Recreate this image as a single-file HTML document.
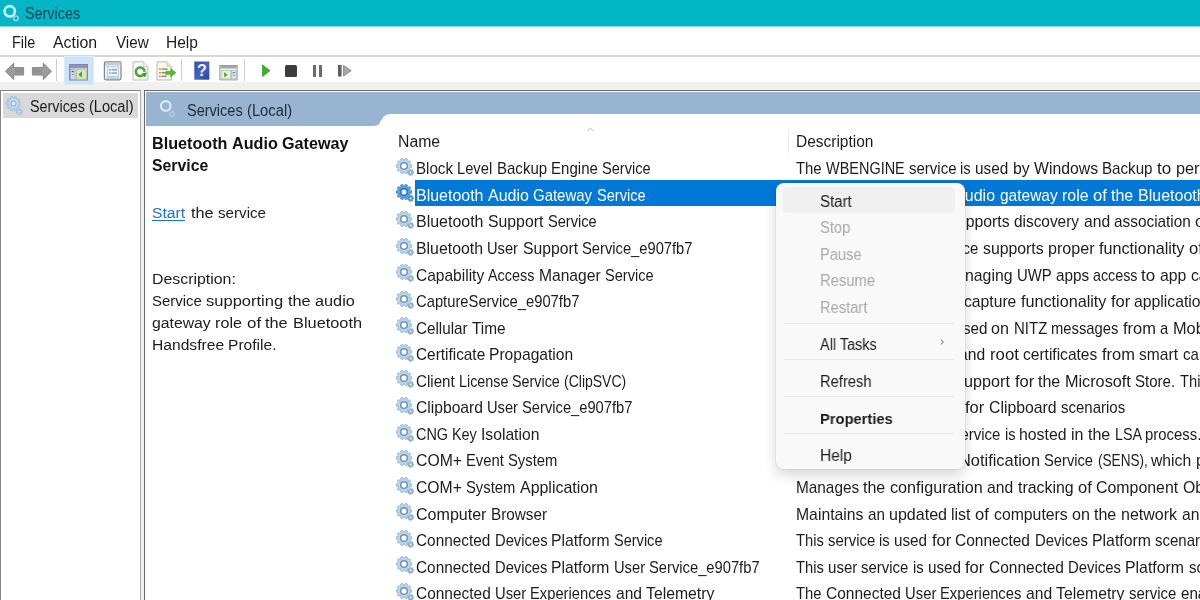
<!DOCTYPE html>
<html lang="en"><head><meta charset="utf-8"><title>Services</title>
<style>
html,body{margin:0;padding:0}
body{width:1200px;height:600px;overflow:hidden;position:relative;background:#fff;font-family:"Liberation Sans",sans-serif;font-size:16px;color:#1a1a1a}
.a{position:absolute}
.t{will-change:transform;position:absolute;white-space:pre;line-height:20px;height:20px}
.lnk .w{text-decoration:underline;text-underline-offset:2px}
.w{position:absolute;top:0;left:0;white-space:pre;transform-origin:0 50%;display:block}
.clip{overflow:hidden}
svg{position:absolute;overflow:visible}
</style></head><body>


<div class="a" id="titlebar" style="left:0;top:0;width:1200px;height:26px;background:#02b6c6;border-bottom:1px solid #7fdae2"></div>
<div class="a" id="menubar" style="left:0;top:27px;width:1200px;height:28px;background:#fff"></div>
<div class="a" style="left:0;top:55.4px;width:1200px;height:1.2px;background:#d6d6d6"></div>
<div class="a" id="toolbar" style="left:0;top:56.6px;width:1200px;height:25.8px;background:#fff"></div>
<div class="a" style="left:0;top:82px;width:1200px;height:518px;background:#f0f0f0"></div>
<!-- left tree pane -->
<div class="a" id="tree" style="left:0;top:90px;width:141px;height:510px;background:#fff;border-top:1px solid #828282;border-left:1px solid #828282;border-right:1px solid #a8a8a8;box-sizing:border-box"></div>
<div class="a" style="left:3px;top:93px;width:134.5px;height:24.5px;background:#d9d9d9"></div>
<!-- right pane -->
<div class="a" id="rpane" style="left:144.4px;top:90.3px;width:1056px;height:510px;background:#fff;border-top:1.2px solid #696969;border-left:1.6px solid #696969;box-sizing:border-box"></div>
<div class="a" id="rhead" style="left:146px;top:91.5px;width:1054px;height:34.3px;background:#99b4d1"></div>
<div class="a" id="list" style="left:380.5px;top:114px;width:820px;height:486px;background:#fff;border-top-left-radius:9px"></div>
<svg style="left:371px;top:116px" width="11" height="10" viewBox="0 0 11 10"><path d="M1 10 Q9.5 10 9.5 4.5 L11 4.5 L11 10 Z" fill="#fff"/></svg>
<div class="a" style="left:787.5px;top:129px;width:1px;height:24px;background:#ececec"></div>
<!-- selection -->
<div class="a" id="sel" style="left:414.6px;top:180.2px;width:786px;height:26.2px;background:#0078d7"></div>

<svg style="left:4px;top:61px" width="22" height="21" viewBox="0 0 22 21">
<path d="M1.5 10.3 L9.7 2.2 L9.7 6.6 L19.6 6.6 L19.6 14 L9.7 14 L9.7 18.4 Z" fill="#9c9c9c" stroke="#868686" stroke-width="1"/>
<path d="M11 8 L18 8 L18 12.6 L11 12.6Z" fill="#8a8a8a" opacity="0.6"/>
</svg>
<svg style="left:31px;top:61px" width="22" height="21" viewBox="0 0 22 21">
<path d="M20.5 10.3 L12.3 2.2 L12.3 6.6 L1.4 6.6 L1.4 14 L12.3 14 L12.3 18.4 Z" fill="#9c9c9c" stroke="#868686" stroke-width="1"/>
<path d="M3 8 L11 8 L11 12.6 L3 12.6Z" fill="#8a8a8a" opacity="0.6"/>
</svg>
<div class="a" style="left:56px;top:59px;width:1px;height:22px;background:#cfcfcf"></div>
<div class="a" style="left:181px;top:59px;width:1px;height:22px;background:#cfcfcf"></div>
<div class="a" style="left:244px;top:59px;width:1px;height:22px;background:#cfcfcf"></div>
<div class="a" style="left:65px;top:57px;width:28px;height:27px;background:#cce4f7;box-shadow:0 0 0 1px #d9ecfa"></div>
<svg style="left:69px;top:64px" width="19" height="17" viewBox="0 0 19 17">
<rect x="0.5" y="0.5" width="18" height="15.5" fill="#e8edf5" stroke="#8289a8" stroke-width="1"/>
<rect x="1" y="1" width="17" height="3.4" fill="#8e94b4"/>
<rect x="1.5" y="5.5" width="4.6" height="10" fill="#d5d9ea" stroke="#9095b5" stroke-width="0.6"/>
<rect x="2.6" y="7" width="2.2" height="1.2" fill="#4b4f6a"/>
<rect x="2.6" y="10" width="2.2" height="1" fill="#7a7f9a"/>
<rect x="7.3" y="5.8" width="10" height="9.4" fill="#d3e9b8" stroke="#98b57b" stroke-width="0.6"/>
<path d="M12.8 7.2 L12.8 13.6 L9.4 10.4Z" fill="#4e9a3a"/>
</svg>
<svg style="left:103px;top:61px" width="20" height="20" viewBox="0 0 20 20">
<rect x="1.4" y="0.8" width="16.6" height="18" rx="1.5" fill="#f4f7fa" stroke="#80858e" stroke-width="1.2"/>
<rect x="2" y="1.6" width="15.6" height="2.6" fill="#c5ccd6"/>
<rect x="4.2" y="5.2" width="11.6" height="10.4" fill="#e9f1f8" stroke="#a9b9c9" stroke-width="0.7"/>
<rect x="6" y="8.2" width="1.6" height="1.2" fill="#6f8bb0"/><rect x="8.6" y="8.2" width="5.6" height="1.2" fill="#7f8fa5"/>
<rect x="6" y="11.4" width="1.6" height="1.2" fill="#6f8bb0"/><rect x="8.6" y="11.4" width="5.6" height="1.2" fill="#7f8fa5"/>
<rect x="3" y="16.2" width="13.6" height="1.8" fill="#a9d7ee"/>
</svg>
<svg style="left:132px;top:61px" width="17" height="20" viewBox="0 0 17 20">
<path d="M1 0.8 L11.2 0.8 L15.8 5.4 L15.8 19 L1 19Z" fill="#fbfbf9" stroke="#b9b9b4" stroke-width="1"/>
<path d="M11.2 0.8 L11.2 5.4 L15.8 5.4" fill="#eee" stroke="#c4c4be" stroke-width="0.8"/>
<circle cx="8.2" cy="10.8" r="4.3" fill="none" stroke="#4aa53a" stroke-width="2.6"/>
<path d="M8.2 10.8 L14.6 10.8 L14.6 16.6 Z" fill="#fbfbf9"/>
<path d="M9.6 12.6 L15 11.4 L13 16.6 Z" fill="#3c9a2e"/>
</svg>
<svg style="left:156px;top:61px" width="21" height="20" viewBox="0 0 21 20">
<path d="M1 0.8 L11 0.8 L15.4 5.2 L15.4 19 L1 19Z" fill="#fbf8ea" stroke="#bdb9a6" stroke-width="1"/>
<path d="M11 0.8 L11 5.2 L15.4 5.2" fill="#eee9d6" stroke="#c6c2ae" stroke-width="0.8"/>
<rect x="3" y="7.4" width="1.8" height="1.4" fill="#b98a3a"/><rect x="5.6" y="7.4" width="6" height="1.4" fill="#8b8674"/>
<rect x="3" y="11" width="1.8" height="1.4" fill="#b98a3a"/><rect x="5.6" y="11" width="4" height="1.4" fill="#8b8674"/>
<rect x="3" y="14.6" width="1.8" height="1.4" fill="#b98a3a"/><rect x="5.6" y="14.6" width="5" height="1.4" fill="#8b8674"/>
<path d="M9.6 10.2 L14.6 10.2 L14.6 7.6 L20 11.8 L14.6 16 L14.6 13.4 L9.6 13.4Z" fill="#5cb83c" stroke="#4aa02e" stroke-width="0.5"/>
</svg>
<svg style="left:194px;top:61px" width="16" height="19" viewBox="0 0 16 19">
<defs><linearGradient id="hg" x1="0" y1="0" x2="1" y2="1"><stop offset="0" stop-color="#2f4ea8"/><stop offset="0.55" stop-color="#4663bd"/><stop offset="1" stop-color="#24409a"/></linearGradient></defs>
<rect x="0.3" y="0.5" width="15" height="18.2" fill="url(#hg)"/>
<text x="7.8" y="15.3" text-anchor="middle" font-family="Liberation Sans, sans-serif" font-weight="700" font-size="16" fill="#eef2ff">?</text>
</svg>
<svg style="left:219px;top:64.6px" width="19" height="15.4" viewBox="0 0 19 16">
<rect x="0.5" y="0.5" width="18" height="15" fill="#eef0f2" stroke="#9a9d9f" stroke-width="1"/>
<rect x="1" y="1" width="17" height="2.6" fill="#a3a6a8"/>
<rect x="1.8" y="5.6" width="9.6" height="8.8" fill="#e6f3dc" stroke="#a3b98f" stroke-width="0.6"/>
<path d="M5 7.2 L5 13 L8.6 10.1Z" fill="#4fa53a"/>
<rect x="12.6" y="5.6" width="4.8" height="8.8" fill="#dfe6f2" stroke="#9aa5bd" stroke-width="0.6"/>
<rect x="13.6" y="7.4" width="2.8" height="1.1" fill="#6e7ea3"/><rect x="13.6" y="10.2" width="2.8" height="1" fill="#8b98b6"/>
</svg>
<svg style="left:261px;top:64px" width="11" height="14" viewBox="0 0 11 14">
<path d="M1.6 1 L9 6.7 L1.6 12.4Z" fill="#3fae2a" stroke="#3fae2a" stroke-width="1" stroke-linejoin="round"/></svg>
<div class="a" style="left:285px;top:65px;width:12px;height:11.5px;background:#3d3d3d;border-radius:1.5px"></div>
<div class="a" style="left:312.5px;top:65px;width:3.6px;height:11.5px;background:#6b6b6b"></div>
<div class="a" style="left:318.8px;top:65px;width:3.6px;height:11.5px;background:#6b6b6b"></div>
<svg style="left:337px;top:64px" width="16" height="14" viewBox="0 0 16 14">
<rect x="1" y="1" width="3.6" height="11.5" fill="#5f5f5f"/>
<path d="M6.6 1.4 L14.2 6.7 L6.6 12Z" fill="#a9a9a9" stroke="#8c8c8c" stroke-width="1" stroke-linejoin="round"/></svg>
<svg style="left:586px;top:126px" width="9" height="7" viewBox="0 0 9 7"><path d="M1.3 5 L4.5 2.2 L7.7 5" fill="none" stroke="#b4b4b4" stroke-width="1"/></svg>
<div class="t" style="left:25.0px;top:4.00px;font-size:16.0px;color:#0b4656;width:55.1px"><span class="w" style="left:0.00px;transform:scaleX(0.8978)">Services</span></div>
<div class="t" style="left:11.5px;top:33.00px;font-size:16px;color:#1c1c1c;width:23.2px"><span class="w" style="left:0.00px;transform:scaleX(0.8989)">File</span></div>
<div class="t" style="left:53.0px;top:33.00px;font-size:16px;color:#1c1c1c;width:44.0px"><span class="w" style="left:0.00px;transform:scaleX(0.9897)">Action</span></div>
<div class="t" style="left:115.8px;top:33.00px;font-size:16px;color:#1c1c1c;width:32.7px"><span class="w" style="left:0.00px;transform:scaleX(0.9503)">View</span></div>
<div class="t" style="left:166.0px;top:33.00px;font-size:16px;color:#1c1c1c;width:32.0px"><span class="w" style="left:0.00px;transform:scaleX(0.9717)">Help</span></div>
<div class="t" style="left:29.5px;top:97.00px;font-size:16px;color:#1c1c1c;width:103.5px"><span class="w" style="left:0.00px;transform:scaleX(0.8964)">Services </span><span class="w" style="left:58.98px;transform:scaleX(0.9104)">(Local)</span></div>
<div class="t" style="left:186.5px;top:101.00px;font-size:16px;color:#1d2b3a;width:104.8px"><span class="w" style="left:0.00px;transform:scaleX(0.9080)">Services </span><span class="w" style="left:59.74px;transform:scaleX(0.9222)">(Local)</span></div>
<div class="t" style="left:152.0px;top:134.00px;font-size:15.8px;color:#111;font-weight:700"><span class="w" style="transform:scaleX(1.0244)">Bluetooth </span></div>
<div class="t" style="left:232.0px;top:134.00px;font-size:15.8px;color:#111;font-weight:700"><span class="w" style="transform:scaleX(1.0236)">Audio </span></div>
<div class="t" style="left:282.3px;top:134.00px;font-size:15.8px;color:#111;font-weight:700"><span class="w" style="transform:scaleX(1.0233)">Gateway</span></div>
<div class="t" style="left:152.0px;top:156.00px;font-size:15.8px;color:#111;font-weight:700"><span class="w" style="transform:scaleX(0.9997)">Service</span></div>
<div class="t lnk" style="left:152.3px;top:203.00px;font-size:15.3px;color:#1d6fcf;width:33.0px"><span class="w" style="left:0.00px;transform:scaleX(1.0225)">Start</span></div>
<div class="t" style="left:190.8px;top:203.00px;font-size:15.3px;color:#1c1c1c;width:75.2px"><span class="w" style="left:0.00px;transform:scaleX(1.0667)">the </span><span class="w" style="left:27.22px;transform:scaleX(0.9908)">service</span></div>
<div class="t" style="left:151.8px;top:269.00px;font-size:15.3px;color:#1c1c1c;width:83.8px"><span class="w" style="left:0.00px;transform:scaleX(1.0376)">Description:</span></div>
<div class="t" style="left:152.0px;top:291.00px;font-size:15.3px;color:#1c1c1c;width:202.9px"><span class="w" style="left:0.00px;transform:scaleX(0.9788)">Service </span><span class="w" style="left:54.09px;transform:scaleX(1.0798)">supporting </span><span class="w" style="left:135.82px;transform:scaleX(1.0667)">the </span><span class="w" style="left:163.04px;transform:scaleX(1.0645)">audio</span></div>
<div class="t" style="left:152.0px;top:313.00px;font-size:15.3px;color:#1c1c1c;width:209.7px"><span class="w" style="left:0.00px;transform:scaleX(1.0301)">gateway </span><span class="w" style="left:63.08px;transform:scaleX(1.0604)">role </span><span class="w" style="left:94.64px;transform:scaleX(1.1028)">of </span><span class="w" style="left:113.41px;transform:scaleX(1.0667)">the </span><span class="w" style="left:140.62px;transform:scaleX(1.0690)">Bluetooth</span></div>
<div class="t" style="left:151.8px;top:335.00px;font-size:15.3px;color:#1c1c1c;width:124.9px"><span class="w" style="left:0.00px;transform:scaleX(1.0215)">Handsfree </span><span class="w" style="left:76.44px;transform:scaleX(1.0189)">Profile.</span></div>
<div class="t" style="left:398.2px;top:132.00px;font-size:16px;color:#1c1c1c;width:42.1px"><span class="w" style="left:0.00px;transform:scaleX(0.9868)">Name</span></div>
<div class="t" style="left:796.0px;top:132.00px;font-size:16px;color:#1c1c1c;width:77.4px"><span class="w" style="left:0.00px;transform:scaleX(0.9674)">Description</span></div>
<div class="t" style="left:416.3px;top:159.00px;font-size:15.7px;color:#1c1c1c;width:234.5px"><span class="w" style="left:0.00px;transform:scaleX(0.9647)">Block </span><span class="w" style="left:41.23px;transform:scaleX(0.9383)">Level </span><span class="w" style="left:80.52px;transform:scaleX(0.9575)">Backup </span><span class="w" style="left:134.80px;transform:scaleX(0.9599)">Engine </span><span class="w" style="left:185.88px;transform:scaleX(0.9295)">Service</span></div>
<div class="t" style="left:416.3px;top:186.00px;font-size:15.7px;color:#fff;width:229.1px"><span class="w" style="left:0.00px;transform:scaleX(1.0173)">Bluetooth </span><span class="w" style="left:71.88px;transform:scaleX(1.0206)">Audio </span><span class="w" style="left:117.28px;transform:scaleX(0.9539)">Gateway </span><span class="w" style="left:180.50px;transform:scaleX(0.9295)">Service</span></div>
<div class="t" style="left:416.3px;top:212.00px;font-size:15.7px;color:#1c1c1c;width:180.3px"><span class="w" style="left:0.00px;transform:scaleX(1.0173)">Bluetooth </span><span class="w" style="left:71.88px;transform:scaleX(1.0075)">Support </span><span class="w" style="left:131.63px;transform:scaleX(0.9295)">Service</span></div>
<div class="t" style="left:416.3px;top:239.00px;font-size:15.7px;color:#1c1c1c;width:276.4px"><span class="w" style="left:0.00px;transform:scaleX(1.0112)">Bluetooth </span><span class="w" style="left:71.45px;transform:scaleX(0.9360)">User </span><span class="w" style="left:106.53px;transform:scaleX(1.0015)">Support </span><span class="w" style="left:165.93px;transform:scaleX(0.9383)">Service_e907fb7</span></div>
<div class="t" style="left:416.3px;top:266.00px;font-size:15.7px;color:#1c1c1c;width:237.3px"><span class="w" style="left:0.00px;transform:scaleX(0.9893)">Capability </span><span class="w" style="left:72.47px;transform:scaleX(0.9159)">Access </span><span class="w" style="left:122.77px;transform:scaleX(0.9950)">Manager </span><span class="w" style="left:188.72px;transform:scaleX(0.9295)">Service</span></div>
<div class="t" style="left:416.3px;top:292.00px;font-size:15.7px;color:#1c1c1c;width:163.4px"><span class="w" style="left:0.00px;transform:scaleX(0.9413)">CaptureService_e907fb7</span></div>
<div class="t" style="left:416.3px;top:319.00px;font-size:15.7px;color:#1c1c1c;width:89.4px"><span class="w" style="left:0.00px;transform:scaleX(0.9694)">Cellular </span><span class="w" style="left:55.78px;transform:scaleX(0.9817)">Time</span></div>
<div class="t" style="left:416.3px;top:345.00px;font-size:15.7px;color:#1c1c1c;width:157.6px"><span class="w" style="left:0.00px;transform:scaleX(0.9798)">Certificate </span><span class="w" style="left:73.47px;transform:scaleX(0.9947)">Propagation</span></div>
<div class="t" style="left:416.3px;top:372.00px;font-size:15.7px;color:#1c1c1c;width:210.2px"><span class="w" style="left:0.00px;transform:scaleX(0.9653)">Client </span><span class="w" style="left:42.93px;transform:scaleX(0.9125)">License </span><span class="w" style="left:96.25px;transform:scaleX(0.9131)">Service </span><span class="w" style="left:148.00px;transform:scaleX(0.8924)">(ClipSVC)</span></div>
<div class="t" style="left:416.3px;top:398.00px;font-size:15.7px;color:#1c1c1c;width:216.8px"><span class="w" style="left:0.00px;transform:scaleX(0.9967)">Clipboard </span><span class="w" style="left:71.28px;transform:scaleX(0.9356)">User </span><span class="w" style="left:106.35px;transform:scaleX(0.9379)">Service_e907fb7</span></div>
<div class="t" style="left:416.3px;top:425.00px;font-size:15.7px;color:#1c1c1c;width:123.3px"><span class="w" style="left:0.00px;transform:scaleX(0.9212)">CNG </span><span class="w" style="left:36.13px;transform:scaleX(0.9177)">Key </span><span class="w" style="left:64.93px;transform:scaleX(0.9988)">Isolation</span></div>
<div class="t" style="left:416.3px;top:451.00px;font-size:15.7px;color:#1c1c1c;width:141.7px"><span class="w" style="left:0.00px;transform:scaleX(1.0061)">COM+ </span><span class="w" style="left:50.43px;transform:scaleX(0.9429)">Event </span><span class="w" style="left:92.38px;transform:scaleX(0.9425)">System</span></div>
<div class="t" style="left:416.3px;top:478.00px;font-size:15.7px;color:#1c1c1c;width:181.6px"><span class="w" style="left:0.00px;transform:scaleX(1.0026)">COM+ </span><span class="w" style="left:50.26px;transform:scaleX(0.9422)">System </span><span class="w" style="left:103.65px;transform:scaleX(1.0156)">Application</span></div>
<div class="t" style="left:416.3px;top:505.00px;font-size:15.7px;color:#1c1c1c;width:131.1px"><span class="w" style="left:0.00px;transform:scaleX(1.0229)">Computer </span><span class="w" style="left:74.93px;transform:scaleX(0.9756)">Browser</span></div>
<div class="t" style="left:416.3px;top:531.00px;font-size:15.7px;color:#1c1c1c;width:246.7px"><span class="w" style="left:0.00px;transform:scaleX(0.9809)">Connected </span><span class="w" style="left:78.72px;transform:scaleX(0.9411)">Devices </span><span class="w" style="left:135.33px;transform:scaleX(1.0025)">Platform </span><span class="w" style="left:198.25px;transform:scaleX(0.9267)">Service</span></div>
<div class="t" style="left:416.3px;top:558.00px;font-size:15.7px;color:#1c1c1c;width:343.6px"><span class="w" style="left:0.00px;transform:scaleX(0.9789)">Connected </span><span class="w" style="left:78.56px;transform:scaleX(0.9392)">Devices </span><span class="w" style="left:135.06px;transform:scaleX(1.0005)">Platform </span><span class="w" style="left:197.86px;transform:scaleX(0.9369)">User </span><span class="w" style="left:232.98px;transform:scaleX(0.9392)">Service_e907fb7</span></div>
<div class="t" style="left:416.3px;top:584.00px;font-size:15.7px;color:#1c1c1c;width:298.5px"><span class="w" style="left:0.00px;transform:scaleX(0.9858)">Connected </span><span class="w" style="left:79.11px;transform:scaleX(0.9435)">User </span><span class="w" style="left:114.48px;transform:scaleX(0.9401)">Experiences </span><span class="w" style="left:199.74px;transform:scaleX(0.9941)">and </span><span class="w" style="left:230.10px;transform:scaleX(1.0058)">Telemetry</span></div>
<div class="t clip" style="left:795.6px;top:159.00px;font-size:15.7px;color:#1c1c1c;width:404.4px"><span class="w" style="left:0.00px;transform:scaleX(0.9488)">The </span><span class="w" style="left:29.78px;transform:scaleX(0.9218)">WBENGINE </span><span class="w" style="left:112.54px;transform:scaleX(0.9564)">service </span><span class="w" style="left:164.25px;transform:scaleX(0.9466)">is </span><span class="w" style="left:179.09px;transform:scaleX(0.9768)">used </span><span class="w" style="left:216.60px;transform:scaleX(1.0108)">by </span><span class="w" style="left:237.76px;transform:scaleX(1.0069)">Windows </span><span class="w" style="left:306.23px;transform:scaleX(0.9661)">Backup </span><span class="w" style="left:361.00px;transform:scaleX(1.0845)">to </span><span class="w" style="left:379.92px;transform:scaleX(1.0379)">perform </span><span class="w" style="left:440.56px;transform:scaleX(1.0008)">backup </span><span class="w" style="left:495.56px;transform:scaleX(1.0010)">and </span><span class="w" style="left:526.14px;transform:scaleX(0.9839)">recovery </span><span class="w" style="left:589.61px;transform:scaleX(1.0022)">operations.</span></div>
<div class="t clip" style="left:795.6px;top:186.00px;font-size:15.7px;color:#fff;width:404.4px"><span class="w" style="left:0.00px;transform:scaleX(0.9378)">Service </span><span class="w" style="left:53.15px;transform:scaleX(1.0344)">supporting </span><span class="w" style="left:133.44px;transform:scaleX(1.0218)">the </span><span class="w" style="left:160.19px;transform:scaleX(1.0166)">audio </span><span class="w" style="left:203.65px;transform:scaleX(0.9869)">gateway </span><span class="w" style="left:265.62px;transform:scaleX(1.0157)">role </span><span class="w" style="left:296.63px;transform:scaleX(1.0564)">of </span><span class="w" style="left:315.07px;transform:scaleX(1.0218)">the </span><span class="w" style="left:341.81px;transform:scaleX(1.0218)">Bluetooth </span><span class="w" style="left:414.01px;transform:scaleX(0.9785)">Handsfree </span><span class="w" style="left:489.11px;transform:scaleX(0.9761)">Profile.</span></div>
<div class="t clip" style="left:795.6px;top:212.00px;font-size:15.7px;color:#1c1c1c;width:404.4px"><span class="w" style="left:0.00px;transform:scaleX(0.9446)">The </span><span class="w" style="left:29.65px;transform:scaleX(1.0218)">Bluetooth </span><span class="w" style="left:101.85px;transform:scaleX(0.9521)">service </span><span class="w" style="left:153.32px;transform:scaleX(1.0076)">supports </span><span class="w" style="left:218.35px;transform:scaleX(0.9803)">discovery </span><span class="w" style="left:287.58px;transform:scaleX(0.9966)">and </span><span class="w" style="left:318.02px;transform:scaleX(0.9796)">association </span><span class="w" style="left:399.18px;transform:scaleX(1.0564)">of </span><span class="w" style="left:417.62px;transform:scaleX(1.0207)">remote </span><span class="w" style="left:471.91px;transform:scaleX(1.0218)">Bluetooth </span><span class="w" style="left:544.11px;transform:scaleX(0.9444)">devices.</span></div>
<div class="t clip" style="left:795.6px;top:239.00px;font-size:15.7px;color:#1c1c1c;width:404.4px"><span class="w" style="left:0.00px;transform:scaleX(0.9446)">The </span><span class="w" style="left:29.65px;transform:scaleX(1.0218)">Bluetooth </span><span class="w" style="left:101.85px;transform:scaleX(0.9616)">user </span><span class="w" style="left:135.40px;transform:scaleX(0.9521)">service </span><span class="w" style="left:186.87px;transform:scaleX(1.0076)">supports </span><span class="w" style="left:251.90px;transform:scaleX(1.0288)">proper </span><span class="w" style="left:303.05px;transform:scaleX(1.0316)">functionality </span><span class="w" style="left:393.01px;transform:scaleX(1.0564)">of </span><span class="w" style="left:411.44px;transform:scaleX(1.0218)">Bluetooth </span><span class="w" style="left:483.64px;transform:scaleX(0.9831)">features </span><span class="w" style="left:543.66px;transform:scaleX(0.9931)">relevant </span><span class="w" style="left:603.42px;transform:scaleX(1.0797)">to </span><span class="w" style="left:622.26px;transform:scaleX(0.9553)">each </span><span class="w" style="left:658.94px;transform:scaleX(0.9616)">user </span><span class="w" style="left:692.49px;transform:scaleX(0.9302)">session.</span></div>
<div class="t clip" style="left:795.6px;top:266.00px;font-size:15.7px;color:#1c1c1c;width:404.4px"><span class="w" style="left:0.00px;transform:scaleX(0.9674)">Provides </span><span class="w" style="left:63.27px;transform:scaleX(0.9963)">facilities </span><span class="w" style="left:123.20px;transform:scaleX(1.0543)">for </span><span class="w" style="left:147.11px;transform:scaleX(1.0090)">managing </span><span class="w" style="left:221.03px;transform:scaleX(0.9487)">UWP </span><span class="w" style="left:259.63px;transform:scaleX(0.9757)">apps </span><span class="w" style="left:297.09px;transform:scaleX(0.9098)">access </span><span class="w" style="left:345.48px;transform:scaleX(1.0797)">to </span><span class="w" style="left:364.32px;transform:scaleX(1.0079)">app </span><span class="w" style="left:395.11px;transform:scaleX(0.9942)">capabilities </span><span class="w" style="left:476.60px;transform:scaleX(0.9062)">as </span><span class="w" style="left:495.58px;transform:scaleX(1.0033)">well </span><span class="w" style="left:527.07px;transform:scaleX(0.9062)">as </span><span class="w" style="left:546.05px;transform:scaleX(0.9914)">checking</span></div>
<div class="t clip" style="left:795.6px;top:292.00px;font-size:15.7px;color:#1c1c1c;width:404.4px"><span class="w" style="left:0.00px;transform:scaleX(0.9349)">Enables </span><span class="w" style="left:57.08px;transform:scaleX(1.0419)">optional </span><span class="w" style="left:118.88px;transform:scaleX(0.9530)">screen </span><span class="w" style="left:167.92px;transform:scaleX(1.0004)">capture </span><span class="w" style="left:224.62px;transform:scaleX(1.0316)">functionality </span><span class="w" style="left:314.58px;transform:scaleX(1.0543)">for </span><span class="w" style="left:338.49px;transform:scaleX(1.0040)">applications </span><span class="w" style="left:426.05px;transform:scaleX(1.0431)">that </span><span class="w" style="left:457.90px;transform:scaleX(0.9740)">call </span><span class="w" style="left:485.08px;transform:scaleX(1.0218)">the </span><span class="w" style="left:511.82px;transform:scaleX(0.9727)">Windows.Graphics.Capture </span><span class="w" style="left:701.80px;transform:scaleX(0.8953)">API.</span></div>
<div class="t clip" style="left:795.6px;top:319.00px;font-size:15.7px;color:#1c1c1c;width:404.4px"><span class="w" style="left:0.00px;transform:scaleX(0.9385)">This </span><span class="w" style="left:31.91px;transform:scaleX(0.9521)">service </span><span class="w" style="left:83.38px;transform:scaleX(0.9413)">sets </span><span class="w" style="left:114.58px;transform:scaleX(1.0353)">time </span><span class="w" style="left:149.78px;transform:scaleX(0.9698)">based </span><span class="w" style="left:195.46px;transform:scaleX(1.0272)">on </span><span class="w" style="left:217.87px;transform:scaleX(0.9549)">NITZ </span><span class="w" style="left:255.32px;transform:scaleX(0.9431)">messages </span><span class="w" style="left:326.87px;transform:scaleX(1.0478)">from </span><span class="w" style="left:364.31px;transform:scaleX(0.9397)">a </span><span class="w" style="left:376.61px;transform:scaleX(1.0421)">Mobile </span><span class="w" style="left:429.32px;transform:scaleX(1.0279)">Network</span></div>
<div class="t clip" style="left:795.6px;top:345.00px;font-size:15.7px;color:#1c1c1c;width:404.4px"><span class="w" style="left:0.00px;transform:scaleX(0.9622)">Copies </span><span class="w" style="left:51.19px;transform:scaleX(0.9616)">user </span><span class="w" style="left:84.74px;transform:scaleX(0.9905)">certificates </span><span class="w" style="left:163.33px;transform:scaleX(0.9966)">and </span><span class="w" style="left:193.78px;transform:scaleX(1.0678)">root </span><span class="w" style="left:227.30px;transform:scaleX(0.9905)">certificates </span><span class="w" style="left:305.89px;transform:scaleX(1.0478)">from </span><span class="w" style="left:343.33px;transform:scaleX(0.9938)">smart </span><span class="w" style="left:386.64px;transform:scaleX(0.9583)">cards </span><span class="w" style="left:427.59px;transform:scaleX(1.0635)">into </span><span class="w" style="left:459.13px;transform:scaleX(1.0218)">the </span><span class="w" style="left:485.87px;transform:scaleX(1.0119)">current </span><span class="w" style="left:539.69px;transform:scaleX(0.9598)">user's </span><span class="w" style="left:583.57px;transform:scaleX(1.0059)">certificate </span><span class="w" style="left:655.50px;transform:scaleX(1.0001)">store</span></div>
<div class="t clip" style="left:795.6px;top:372.00px;font-size:15.7px;color:#1c1c1c;width:404.4px"><span class="w" style="left:0.00px;transform:scaleX(0.9674)">Provides </span><span class="w" style="left:63.27px;transform:scaleX(1.0104)">infrastructure </span><span class="w" style="left:160.17px;transform:scaleX(1.0294)">support </span><span class="w" style="left:218.52px;transform:scaleX(1.0543)">for </span><span class="w" style="left:242.42px;transform:scaleX(1.0218)">the </span><span class="w" style="left:269.17px;transform:scaleX(1.0337)">Microsoft </span><span class="w" style="left:339.46px;transform:scaleX(0.9581)">Store. </span><span class="w" style="left:383.74px;transform:scaleX(0.9385)">This </span><span class="w" style="left:415.65px;transform:scaleX(0.9521)">service </span><span class="w" style="left:467.13px;transform:scaleX(0.9424)">is </span><span class="w" style="left:481.91px;transform:scaleX(1.0045)">started </span><span class="w" style="left:534.47px;transform:scaleX(1.0272)">on </span><span class="w" style="left:556.88px;transform:scaleX(1.0078)">demand</span></div>
<div class="t clip" style="left:795.6px;top:398.00px;font-size:15.7px;color:#1c1c1c;width:404.4px"><span class="w" style="left:0.00px;transform:scaleX(0.9385)">This </span><span class="w" style="left:31.91px;transform:scaleX(0.9616)">user </span><span class="w" style="left:65.46px;transform:scaleX(0.9521)">service </span><span class="w" style="left:116.93px;transform:scaleX(0.9424)">is </span><span class="w" style="left:131.72px;transform:scaleX(0.9725)">used </span><span class="w" style="left:169.05px;transform:scaleX(1.0543)">for </span><span class="w" style="left:192.95px;transform:scaleX(1.0076)">Clipboard </span><span class="w" style="left:265.01px;transform:scaleX(0.9561)">scenarios</span></div>
<div class="t clip" style="left:795.6px;top:425.00px;font-size:15.7px;color:#1c1c1c;width:404.4px"><span class="w" style="left:0.00px;transform:scaleX(0.9446)">The </span><span class="w" style="left:29.65px;transform:scaleX(0.9328)">CNG </span><span class="w" style="left:66.23px;transform:scaleX(0.9681)">key </span><span class="w" style="left:94.10px;transform:scaleX(1.0180)">isolation </span><span class="w" style="left:157.13px;transform:scaleX(0.9521)">service </span><span class="w" style="left:208.60px;transform:scaleX(0.9424)">is </span><span class="w" style="left:223.39px;transform:scaleX(1.0079)">hosted </span><span class="w" style="left:275.26px;transform:scaleX(1.0256)">in </span><span class="w" style="left:292.26px;transform:scaleX(1.0218)">the </span><span class="w" style="left:319.01px;transform:scaleX(0.9103)">LSA </span><span class="w" style="left:349.19px;transform:scaleX(0.9497)">process. </span><span class="w" style="left:409.64px;transform:scaleX(0.9446)">The </span><span class="w" style="left:439.29px;transform:scaleX(0.9521)">service </span><span class="w" style="left:490.77px;transform:scaleX(1.0006)">provides </span><span class="w" style="left:554.46px;transform:scaleX(0.9681)">key </span><span class="w" style="left:582.32px;transform:scaleX(0.9620)">process </span><span class="w" style="left:639.37px;transform:scaleX(1.0202)">isolation</span></div>
<div class="t clip" style="left:795.6px;top:451.00px;font-size:15.7px;color:#1c1c1c;width:404.4px"><span class="w" style="left:0.00px;transform:scaleX(0.9931)">Supports </span><span class="w" style="left:66.69px;transform:scaleX(0.9516)">System </span><span class="w" style="left:120.62px;transform:scaleX(0.9490)">Event </span><span class="w" style="left:162.84px;transform:scaleX(1.0447)">Notification </span><span class="w" style="left:248.47px;transform:scaleX(0.9378)">Service </span><span class="w" style="left:301.62px;transform:scaleX(0.8660)">(SENS), </span><span class="w" style="left:355.22px;transform:scaleX(1.0008)">which </span><span class="w" style="left:399.72px;transform:scaleX(1.0006)">provides </span><span class="w" style="left:463.42px;transform:scaleX(1.0178)">automatic </span><span class="w" style="left:537.08px;transform:scaleX(1.0469)">distribution </span><span class="w" style="left:621.08px;transform:scaleX(1.0564)">of </span><span class="w" style="left:639.52px;transform:scaleX(0.9700)">events</span></div>
<div class="t clip" style="left:795.6px;top:478.00px;font-size:15.7px;color:#1c1c1c;width:404.4px"><span class="w" style="left:0.00px;transform:scaleX(0.9788)">Manages </span><span class="w" style="left:67.45px;transform:scaleX(1.0218)">the </span><span class="w" style="left:94.19px;transform:scaleX(1.0323)">configuration </span><span class="w" style="left:191.42px;transform:scaleX(0.9966)">and </span><span class="w" style="left:221.86px;transform:scaleX(1.0138)">tracking </span><span class="w" style="left:281.98px;transform:scaleX(1.0564)">of </span><span class="w" style="left:300.41px;transform:scaleX(1.0129)">Component </span><span class="w" style="left:386.98px;transform:scaleX(1.0063)">Object </span><span class="w" style="left:437.00px;transform:scaleX(1.0386)">Model </span><span class="w" style="left:485.91px;transform:scaleX(0.9942)">(COM)+-based </span><span class="w" style="left:593.82px;transform:scaleX(1.0004)">components.</span></div>
<div class="t clip" style="left:795.6px;top:505.00px;font-size:15.7px;color:#1c1c1c;width:404.4px"><span class="w" style="left:0.00px;transform:scaleX(1.0043)">Maintains </span><span class="w" style="left:71.81px;transform:scaleX(0.9716)">an </span><span class="w" style="left:93.00px;transform:scaleX(1.0230)">updated </span><span class="w" style="left:155.48px;transform:scaleX(1.0164)">list </span><span class="w" style="left:179.40px;transform:scaleX(1.0564)">of </span><span class="w" style="left:197.84px;transform:scaleX(1.0067)">computers </span><span class="w" style="left:275.97px;transform:scaleX(1.0272)">on </span><span class="w" style="left:298.37px;transform:scaleX(1.0218)">the </span><span class="w" style="left:325.12px;transform:scaleX(1.0217)">network </span><span class="w" style="left:385.70px;transform:scaleX(0.9966)">and </span><span class="w" style="left:416.14px;transform:scaleX(0.9827)">supplies </span><span class="w" style="left:477.00px;transform:scaleX(1.0076)">this </span><span class="w" style="left:506.00px;transform:scaleX(1.0221)">list</span></div>
<div class="t clip" style="left:795.6px;top:531.00px;font-size:15.7px;color:#1c1c1c;width:404.4px"><span class="w" style="left:0.00px;transform:scaleX(0.9385)">This </span><span class="w" style="left:31.91px;transform:scaleX(0.9521)">service </span><span class="w" style="left:83.38px;transform:scaleX(0.9424)">is </span><span class="w" style="left:98.17px;transform:scaleX(0.9725)">used </span><span class="w" style="left:135.50px;transform:scaleX(1.0543)">for </span><span class="w" style="left:159.40px;transform:scaleX(0.9882)">Connected </span><span class="w" style="left:238.71px;transform:scaleX(0.9482)">Devices </span><span class="w" style="left:295.75px;transform:scaleX(1.0100)">Platform </span><span class="w" style="left:359.14px;transform:scaleX(0.9561)">scenarios</span></div>
<div class="t clip" style="left:795.6px;top:558.00px;font-size:15.7px;color:#1c1c1c;width:404.4px"><span class="w" style="left:0.00px;transform:scaleX(0.9385)">This </span><span class="w" style="left:31.91px;transform:scaleX(0.9616)">user </span><span class="w" style="left:65.46px;transform:scaleX(0.9521)">service </span><span class="w" style="left:116.93px;transform:scaleX(0.9424)">is </span><span class="w" style="left:131.72px;transform:scaleX(0.9725)">used </span><span class="w" style="left:169.05px;transform:scaleX(1.0543)">for </span><span class="w" style="left:192.95px;transform:scaleX(0.9882)">Connected </span><span class="w" style="left:272.26px;transform:scaleX(0.9482)">Devices </span><span class="w" style="left:329.30px;transform:scaleX(1.0100)">Platform </span><span class="w" style="left:392.69px;transform:scaleX(0.9561)">scenarios</span></div>
<div class="t clip" style="left:795.6px;top:584.00px;font-size:15.7px;color:#1c1c1c;width:404.4px"><span class="w" style="left:0.00px;transform:scaleX(0.9446)">The </span><span class="w" style="left:29.65px;transform:scaleX(0.9882)">Connected </span><span class="w" style="left:108.96px;transform:scaleX(0.9458)">User </span><span class="w" style="left:144.41px;transform:scaleX(0.9425)">Experiences </span><span class="w" style="left:229.88px;transform:scaleX(0.9966)">and </span><span class="w" style="left:260.32px;transform:scaleX(1.0070)">Telemetry </span><span class="w" style="left:333.19px;transform:scaleX(0.9521)">service </span><span class="w" style="left:384.66px;transform:scaleX(0.9670)">enables </span><span class="w" style="left:442.02px;transform:scaleX(0.9831)">features </span><span class="w" style="left:502.03px;transform:scaleX(1.0431)">that </span><span class="w" style="left:533.88px;transform:scaleX(1.0328)">support</span></div>
<svg style="left:396px;top:157.9px" width="20.0" height="20.0" viewBox="0 0 20 20"><path d="M16.70 13.76 L17.62 13.71 L17.62 15.09 L16.70 15.04 L16.41 15.64 L17.02 16.33 L15.95 17.19 L15.41 16.45 L14.76 16.59 L14.60 17.50 L13.25 17.19 L13.51 16.31 L12.98 15.89 L12.18 16.33 L11.58 15.09 L12.43 14.73 L12.43 14.07 L11.58 13.71 L12.18 12.47 L12.98 12.91 L13.51 12.49 L13.25 11.61 L14.60 11.30 L14.76 12.21 L15.41 12.35 L15.95 11.61 L17.02 12.47 L16.41 13.16Z" fill="#8fafcd" stroke="#7696b8" stroke-width="0.5"/><circle cx="14.6" cy="14.4" r="0.9" fill="#ffffff"/><path d="M13.87 6.76 L15.61 6.80 L15.61 9.20 L13.87 9.24 L13.48 10.45 L14.86 11.50 L13.44 13.44 L12.02 12.45 L10.99 13.20 L11.50 14.86 L9.20 15.61 L8.64 13.97 L7.36 13.97 L6.80 15.61 L4.50 14.86 L5.01 13.20 L3.98 12.45 L2.56 13.44 L1.14 11.50 L2.52 10.45 L2.13 9.24 L0.39 9.20 L0.39 6.80 L2.13 6.76 L2.52 5.55 L1.14 4.50 L2.56 2.56 L3.98 3.55 L5.01 2.80 L4.50 1.14 L6.80 0.39 L7.36 2.03 L8.64 2.03 L9.20 0.39 L11.50 1.14 L10.99 2.80 L12.02 3.55 L13.44 2.56 L14.86 4.50 L13.48 5.55Z" fill="#bdd6ec" stroke="#8eaecb" stroke-width="0.8"/><circle cx="8" cy="8" r="3.3" fill="#ffffff" stroke="#6e91b5" stroke-width="1.5"/></svg>
<svg style="left:396px;top:184.46px" width="20.0" height="20.0" viewBox="0 0 20 20"><path d="M16.70 13.76 L17.62 13.71 L17.62 15.09 L16.70 15.04 L16.41 15.64 L17.02 16.33 L15.95 17.19 L15.41 16.45 L14.76 16.59 L14.60 17.50 L13.25 17.19 L13.51 16.31 L12.98 15.89 L12.18 16.33 L11.58 15.09 L12.43 14.73 L12.43 14.07 L11.58 13.71 L12.18 12.47 L12.98 12.91 L13.51 12.49 L13.25 11.61 L14.60 11.30 L14.76 12.21 L15.41 12.35 L15.95 11.61 L17.02 12.47 L16.41 13.16Z" fill="#4f93d6" stroke="#3c82c8" stroke-width="0.5"/><circle cx="14.6" cy="14.4" r="0.9" fill="#eef6fd"/><path d="M13.87 6.76 L15.61 6.80 L15.61 9.20 L13.87 9.24 L13.48 10.45 L14.86 11.50 L13.44 13.44 L12.02 12.45 L10.99 13.20 L11.50 14.86 L9.20 15.61 L8.64 13.97 L7.36 13.97 L6.80 15.61 L4.50 14.86 L5.01 13.20 L3.98 12.45 L2.56 13.44 L1.14 11.50 L2.52 10.45 L2.13 9.24 L0.39 9.20 L0.39 6.80 L2.13 6.76 L2.52 5.55 L1.14 4.50 L2.56 2.56 L3.98 3.55 L5.01 2.80 L4.50 1.14 L6.80 0.39 L7.36 2.03 L8.64 2.03 L9.20 0.39 L11.50 1.14 L10.99 2.80 L12.02 3.55 L13.44 2.56 L14.86 4.50 L13.48 5.55Z" fill="#5a9fe0" stroke="#3c82c8" stroke-width="0.8"/><circle cx="8" cy="8" r="3.3" fill="#eef6fd" stroke="#2f6fb8" stroke-width="1.5"/></svg>
<svg style="left:396px;top:211.02px" width="20.0" height="20.0" viewBox="0 0 20 20"><path d="M16.70 13.76 L17.62 13.71 L17.62 15.09 L16.70 15.04 L16.41 15.64 L17.02 16.33 L15.95 17.19 L15.41 16.45 L14.76 16.59 L14.60 17.50 L13.25 17.19 L13.51 16.31 L12.98 15.89 L12.18 16.33 L11.58 15.09 L12.43 14.73 L12.43 14.07 L11.58 13.71 L12.18 12.47 L12.98 12.91 L13.51 12.49 L13.25 11.61 L14.60 11.30 L14.76 12.21 L15.41 12.35 L15.95 11.61 L17.02 12.47 L16.41 13.16Z" fill="#8fafcd" stroke="#7696b8" stroke-width="0.5"/><circle cx="14.6" cy="14.4" r="0.9" fill="#ffffff"/><path d="M13.87 6.76 L15.61 6.80 L15.61 9.20 L13.87 9.24 L13.48 10.45 L14.86 11.50 L13.44 13.44 L12.02 12.45 L10.99 13.20 L11.50 14.86 L9.20 15.61 L8.64 13.97 L7.36 13.97 L6.80 15.61 L4.50 14.86 L5.01 13.20 L3.98 12.45 L2.56 13.44 L1.14 11.50 L2.52 10.45 L2.13 9.24 L0.39 9.20 L0.39 6.80 L2.13 6.76 L2.52 5.55 L1.14 4.50 L2.56 2.56 L3.98 3.55 L5.01 2.80 L4.50 1.14 L6.80 0.39 L7.36 2.03 L8.64 2.03 L9.20 0.39 L11.50 1.14 L10.99 2.80 L12.02 3.55 L13.44 2.56 L14.86 4.50 L13.48 5.55Z" fill="#bdd6ec" stroke="#8eaecb" stroke-width="0.8"/><circle cx="8" cy="8" r="3.3" fill="#ffffff" stroke="#6e91b5" stroke-width="1.5"/></svg>
<svg style="left:396px;top:237.58px" width="20.0" height="20.0" viewBox="0 0 20 20"><path d="M16.70 13.76 L17.62 13.71 L17.62 15.09 L16.70 15.04 L16.41 15.64 L17.02 16.33 L15.95 17.19 L15.41 16.45 L14.76 16.59 L14.60 17.50 L13.25 17.19 L13.51 16.31 L12.98 15.89 L12.18 16.33 L11.58 15.09 L12.43 14.73 L12.43 14.07 L11.58 13.71 L12.18 12.47 L12.98 12.91 L13.51 12.49 L13.25 11.61 L14.60 11.30 L14.76 12.21 L15.41 12.35 L15.95 11.61 L17.02 12.47 L16.41 13.16Z" fill="#8fafcd" stroke="#7696b8" stroke-width="0.5"/><circle cx="14.6" cy="14.4" r="0.9" fill="#ffffff"/><path d="M13.87 6.76 L15.61 6.80 L15.61 9.20 L13.87 9.24 L13.48 10.45 L14.86 11.50 L13.44 13.44 L12.02 12.45 L10.99 13.20 L11.50 14.86 L9.20 15.61 L8.64 13.97 L7.36 13.97 L6.80 15.61 L4.50 14.86 L5.01 13.20 L3.98 12.45 L2.56 13.44 L1.14 11.50 L2.52 10.45 L2.13 9.24 L0.39 9.20 L0.39 6.80 L2.13 6.76 L2.52 5.55 L1.14 4.50 L2.56 2.56 L3.98 3.55 L5.01 2.80 L4.50 1.14 L6.80 0.39 L7.36 2.03 L8.64 2.03 L9.20 0.39 L11.50 1.14 L10.99 2.80 L12.02 3.55 L13.44 2.56 L14.86 4.50 L13.48 5.55Z" fill="#bdd6ec" stroke="#8eaecb" stroke-width="0.8"/><circle cx="8" cy="8" r="3.3" fill="#ffffff" stroke="#6e91b5" stroke-width="1.5"/></svg>
<svg style="left:396px;top:264.14px" width="20.0" height="20.0" viewBox="0 0 20 20"><path d="M16.70 13.76 L17.62 13.71 L17.62 15.09 L16.70 15.04 L16.41 15.64 L17.02 16.33 L15.95 17.19 L15.41 16.45 L14.76 16.59 L14.60 17.50 L13.25 17.19 L13.51 16.31 L12.98 15.89 L12.18 16.33 L11.58 15.09 L12.43 14.73 L12.43 14.07 L11.58 13.71 L12.18 12.47 L12.98 12.91 L13.51 12.49 L13.25 11.61 L14.60 11.30 L14.76 12.21 L15.41 12.35 L15.95 11.61 L17.02 12.47 L16.41 13.16Z" fill="#8fafcd" stroke="#7696b8" stroke-width="0.5"/><circle cx="14.6" cy="14.4" r="0.9" fill="#ffffff"/><path d="M13.87 6.76 L15.61 6.80 L15.61 9.20 L13.87 9.24 L13.48 10.45 L14.86 11.50 L13.44 13.44 L12.02 12.45 L10.99 13.20 L11.50 14.86 L9.20 15.61 L8.64 13.97 L7.36 13.97 L6.80 15.61 L4.50 14.86 L5.01 13.20 L3.98 12.45 L2.56 13.44 L1.14 11.50 L2.52 10.45 L2.13 9.24 L0.39 9.20 L0.39 6.80 L2.13 6.76 L2.52 5.55 L1.14 4.50 L2.56 2.56 L3.98 3.55 L5.01 2.80 L4.50 1.14 L6.80 0.39 L7.36 2.03 L8.64 2.03 L9.20 0.39 L11.50 1.14 L10.99 2.80 L12.02 3.55 L13.44 2.56 L14.86 4.50 L13.48 5.55Z" fill="#bdd6ec" stroke="#8eaecb" stroke-width="0.8"/><circle cx="8" cy="8" r="3.3" fill="#ffffff" stroke="#6e91b5" stroke-width="1.5"/></svg>
<svg style="left:396px;top:290.69999999999993px" width="20.0" height="20.0" viewBox="0 0 20 20"><path d="M16.70 13.76 L17.62 13.71 L17.62 15.09 L16.70 15.04 L16.41 15.64 L17.02 16.33 L15.95 17.19 L15.41 16.45 L14.76 16.59 L14.60 17.50 L13.25 17.19 L13.51 16.31 L12.98 15.89 L12.18 16.33 L11.58 15.09 L12.43 14.73 L12.43 14.07 L11.58 13.71 L12.18 12.47 L12.98 12.91 L13.51 12.49 L13.25 11.61 L14.60 11.30 L14.76 12.21 L15.41 12.35 L15.95 11.61 L17.02 12.47 L16.41 13.16Z" fill="#8fafcd" stroke="#7696b8" stroke-width="0.5"/><circle cx="14.6" cy="14.4" r="0.9" fill="#ffffff"/><path d="M13.87 6.76 L15.61 6.80 L15.61 9.20 L13.87 9.24 L13.48 10.45 L14.86 11.50 L13.44 13.44 L12.02 12.45 L10.99 13.20 L11.50 14.86 L9.20 15.61 L8.64 13.97 L7.36 13.97 L6.80 15.61 L4.50 14.86 L5.01 13.20 L3.98 12.45 L2.56 13.44 L1.14 11.50 L2.52 10.45 L2.13 9.24 L0.39 9.20 L0.39 6.80 L2.13 6.76 L2.52 5.55 L1.14 4.50 L2.56 2.56 L3.98 3.55 L5.01 2.80 L4.50 1.14 L6.80 0.39 L7.36 2.03 L8.64 2.03 L9.20 0.39 L11.50 1.14 L10.99 2.80 L12.02 3.55 L13.44 2.56 L14.86 4.50 L13.48 5.55Z" fill="#bdd6ec" stroke="#8eaecb" stroke-width="0.8"/><circle cx="8" cy="8" r="3.3" fill="#ffffff" stroke="#6e91b5" stroke-width="1.5"/></svg>
<svg style="left:396px;top:317.26px" width="20.0" height="20.0" viewBox="0 0 20 20"><path d="M16.70 13.76 L17.62 13.71 L17.62 15.09 L16.70 15.04 L16.41 15.64 L17.02 16.33 L15.95 17.19 L15.41 16.45 L14.76 16.59 L14.60 17.50 L13.25 17.19 L13.51 16.31 L12.98 15.89 L12.18 16.33 L11.58 15.09 L12.43 14.73 L12.43 14.07 L11.58 13.71 L12.18 12.47 L12.98 12.91 L13.51 12.49 L13.25 11.61 L14.60 11.30 L14.76 12.21 L15.41 12.35 L15.95 11.61 L17.02 12.47 L16.41 13.16Z" fill="#8fafcd" stroke="#7696b8" stroke-width="0.5"/><circle cx="14.6" cy="14.4" r="0.9" fill="#ffffff"/><path d="M13.87 6.76 L15.61 6.80 L15.61 9.20 L13.87 9.24 L13.48 10.45 L14.86 11.50 L13.44 13.44 L12.02 12.45 L10.99 13.20 L11.50 14.86 L9.20 15.61 L8.64 13.97 L7.36 13.97 L6.80 15.61 L4.50 14.86 L5.01 13.20 L3.98 12.45 L2.56 13.44 L1.14 11.50 L2.52 10.45 L2.13 9.24 L0.39 9.20 L0.39 6.80 L2.13 6.76 L2.52 5.55 L1.14 4.50 L2.56 2.56 L3.98 3.55 L5.01 2.80 L4.50 1.14 L6.80 0.39 L7.36 2.03 L8.64 2.03 L9.20 0.39 L11.50 1.14 L10.99 2.80 L12.02 3.55 L13.44 2.56 L14.86 4.50 L13.48 5.55Z" fill="#bdd6ec" stroke="#8eaecb" stroke-width="0.8"/><circle cx="8" cy="8" r="3.3" fill="#ffffff" stroke="#6e91b5" stroke-width="1.5"/></svg>
<svg style="left:396px;top:343.81999999999994px" width="20.0" height="20.0" viewBox="0 0 20 20"><path d="M16.70 13.76 L17.62 13.71 L17.62 15.09 L16.70 15.04 L16.41 15.64 L17.02 16.33 L15.95 17.19 L15.41 16.45 L14.76 16.59 L14.60 17.50 L13.25 17.19 L13.51 16.31 L12.98 15.89 L12.18 16.33 L11.58 15.09 L12.43 14.73 L12.43 14.07 L11.58 13.71 L12.18 12.47 L12.98 12.91 L13.51 12.49 L13.25 11.61 L14.60 11.30 L14.76 12.21 L15.41 12.35 L15.95 11.61 L17.02 12.47 L16.41 13.16Z" fill="#8fafcd" stroke="#7696b8" stroke-width="0.5"/><circle cx="14.6" cy="14.4" r="0.9" fill="#ffffff"/><path d="M13.87 6.76 L15.61 6.80 L15.61 9.20 L13.87 9.24 L13.48 10.45 L14.86 11.50 L13.44 13.44 L12.02 12.45 L10.99 13.20 L11.50 14.86 L9.20 15.61 L8.64 13.97 L7.36 13.97 L6.80 15.61 L4.50 14.86 L5.01 13.20 L3.98 12.45 L2.56 13.44 L1.14 11.50 L2.52 10.45 L2.13 9.24 L0.39 9.20 L0.39 6.80 L2.13 6.76 L2.52 5.55 L1.14 4.50 L2.56 2.56 L3.98 3.55 L5.01 2.80 L4.50 1.14 L6.80 0.39 L7.36 2.03 L8.64 2.03 L9.20 0.39 L11.50 1.14 L10.99 2.80 L12.02 3.55 L13.44 2.56 L14.86 4.50 L13.48 5.55Z" fill="#bdd6ec" stroke="#8eaecb" stroke-width="0.8"/><circle cx="8" cy="8" r="3.3" fill="#ffffff" stroke="#6e91b5" stroke-width="1.5"/></svg>
<svg style="left:396px;top:370.38px" width="20.0" height="20.0" viewBox="0 0 20 20"><path d="M16.70 13.76 L17.62 13.71 L17.62 15.09 L16.70 15.04 L16.41 15.64 L17.02 16.33 L15.95 17.19 L15.41 16.45 L14.76 16.59 L14.60 17.50 L13.25 17.19 L13.51 16.31 L12.98 15.89 L12.18 16.33 L11.58 15.09 L12.43 14.73 L12.43 14.07 L11.58 13.71 L12.18 12.47 L12.98 12.91 L13.51 12.49 L13.25 11.61 L14.60 11.30 L14.76 12.21 L15.41 12.35 L15.95 11.61 L17.02 12.47 L16.41 13.16Z" fill="#8fafcd" stroke="#7696b8" stroke-width="0.5"/><circle cx="14.6" cy="14.4" r="0.9" fill="#ffffff"/><path d="M13.87 6.76 L15.61 6.80 L15.61 9.20 L13.87 9.24 L13.48 10.45 L14.86 11.50 L13.44 13.44 L12.02 12.45 L10.99 13.20 L11.50 14.86 L9.20 15.61 L8.64 13.97 L7.36 13.97 L6.80 15.61 L4.50 14.86 L5.01 13.20 L3.98 12.45 L2.56 13.44 L1.14 11.50 L2.52 10.45 L2.13 9.24 L0.39 9.20 L0.39 6.80 L2.13 6.76 L2.52 5.55 L1.14 4.50 L2.56 2.56 L3.98 3.55 L5.01 2.80 L4.50 1.14 L6.80 0.39 L7.36 2.03 L8.64 2.03 L9.20 0.39 L11.50 1.14 L10.99 2.80 L12.02 3.55 L13.44 2.56 L14.86 4.50 L13.48 5.55Z" fill="#bdd6ec" stroke="#8eaecb" stroke-width="0.8"/><circle cx="8" cy="8" r="3.3" fill="#ffffff" stroke="#6e91b5" stroke-width="1.5"/></svg>
<svg style="left:396px;top:396.93999999999994px" width="20.0" height="20.0" viewBox="0 0 20 20"><path d="M16.70 13.76 L17.62 13.71 L17.62 15.09 L16.70 15.04 L16.41 15.64 L17.02 16.33 L15.95 17.19 L15.41 16.45 L14.76 16.59 L14.60 17.50 L13.25 17.19 L13.51 16.31 L12.98 15.89 L12.18 16.33 L11.58 15.09 L12.43 14.73 L12.43 14.07 L11.58 13.71 L12.18 12.47 L12.98 12.91 L13.51 12.49 L13.25 11.61 L14.60 11.30 L14.76 12.21 L15.41 12.35 L15.95 11.61 L17.02 12.47 L16.41 13.16Z" fill="#8fafcd" stroke="#7696b8" stroke-width="0.5"/><circle cx="14.6" cy="14.4" r="0.9" fill="#ffffff"/><path d="M13.87 6.76 L15.61 6.80 L15.61 9.20 L13.87 9.24 L13.48 10.45 L14.86 11.50 L13.44 13.44 L12.02 12.45 L10.99 13.20 L11.50 14.86 L9.20 15.61 L8.64 13.97 L7.36 13.97 L6.80 15.61 L4.50 14.86 L5.01 13.20 L3.98 12.45 L2.56 13.44 L1.14 11.50 L2.52 10.45 L2.13 9.24 L0.39 9.20 L0.39 6.80 L2.13 6.76 L2.52 5.55 L1.14 4.50 L2.56 2.56 L3.98 3.55 L5.01 2.80 L4.50 1.14 L6.80 0.39 L7.36 2.03 L8.64 2.03 L9.20 0.39 L11.50 1.14 L10.99 2.80 L12.02 3.55 L13.44 2.56 L14.86 4.50 L13.48 5.55Z" fill="#bdd6ec" stroke="#8eaecb" stroke-width="0.8"/><circle cx="8" cy="8" r="3.3" fill="#ffffff" stroke="#6e91b5" stroke-width="1.5"/></svg>
<svg style="left:396px;top:423.49999999999994px" width="20.0" height="20.0" viewBox="0 0 20 20"><path d="M16.70 13.76 L17.62 13.71 L17.62 15.09 L16.70 15.04 L16.41 15.64 L17.02 16.33 L15.95 17.19 L15.41 16.45 L14.76 16.59 L14.60 17.50 L13.25 17.19 L13.51 16.31 L12.98 15.89 L12.18 16.33 L11.58 15.09 L12.43 14.73 L12.43 14.07 L11.58 13.71 L12.18 12.47 L12.98 12.91 L13.51 12.49 L13.25 11.61 L14.60 11.30 L14.76 12.21 L15.41 12.35 L15.95 11.61 L17.02 12.47 L16.41 13.16Z" fill="#8fafcd" stroke="#7696b8" stroke-width="0.5"/><circle cx="14.6" cy="14.4" r="0.9" fill="#ffffff"/><path d="M13.87 6.76 L15.61 6.80 L15.61 9.20 L13.87 9.24 L13.48 10.45 L14.86 11.50 L13.44 13.44 L12.02 12.45 L10.99 13.20 L11.50 14.86 L9.20 15.61 L8.64 13.97 L7.36 13.97 L6.80 15.61 L4.50 14.86 L5.01 13.20 L3.98 12.45 L2.56 13.44 L1.14 11.50 L2.52 10.45 L2.13 9.24 L0.39 9.20 L0.39 6.80 L2.13 6.76 L2.52 5.55 L1.14 4.50 L2.56 2.56 L3.98 3.55 L5.01 2.80 L4.50 1.14 L6.80 0.39 L7.36 2.03 L8.64 2.03 L9.20 0.39 L11.50 1.14 L10.99 2.80 L12.02 3.55 L13.44 2.56 L14.86 4.50 L13.48 5.55Z" fill="#bdd6ec" stroke="#8eaecb" stroke-width="0.8"/><circle cx="8" cy="8" r="3.3" fill="#ffffff" stroke="#6e91b5" stroke-width="1.5"/></svg>
<svg style="left:396px;top:450.05999999999995px" width="20.0" height="20.0" viewBox="0 0 20 20"><path d="M16.70 13.76 L17.62 13.71 L17.62 15.09 L16.70 15.04 L16.41 15.64 L17.02 16.33 L15.95 17.19 L15.41 16.45 L14.76 16.59 L14.60 17.50 L13.25 17.19 L13.51 16.31 L12.98 15.89 L12.18 16.33 L11.58 15.09 L12.43 14.73 L12.43 14.07 L11.58 13.71 L12.18 12.47 L12.98 12.91 L13.51 12.49 L13.25 11.61 L14.60 11.30 L14.76 12.21 L15.41 12.35 L15.95 11.61 L17.02 12.47 L16.41 13.16Z" fill="#8fafcd" stroke="#7696b8" stroke-width="0.5"/><circle cx="14.6" cy="14.4" r="0.9" fill="#ffffff"/><path d="M13.87 6.76 L15.61 6.80 L15.61 9.20 L13.87 9.24 L13.48 10.45 L14.86 11.50 L13.44 13.44 L12.02 12.45 L10.99 13.20 L11.50 14.86 L9.20 15.61 L8.64 13.97 L7.36 13.97 L6.80 15.61 L4.50 14.86 L5.01 13.20 L3.98 12.45 L2.56 13.44 L1.14 11.50 L2.52 10.45 L2.13 9.24 L0.39 9.20 L0.39 6.80 L2.13 6.76 L2.52 5.55 L1.14 4.50 L2.56 2.56 L3.98 3.55 L5.01 2.80 L4.50 1.14 L6.80 0.39 L7.36 2.03 L8.64 2.03 L9.20 0.39 L11.50 1.14 L10.99 2.80 L12.02 3.55 L13.44 2.56 L14.86 4.50 L13.48 5.55Z" fill="#bdd6ec" stroke="#8eaecb" stroke-width="0.8"/><circle cx="8" cy="8" r="3.3" fill="#ffffff" stroke="#6e91b5" stroke-width="1.5"/></svg>
<svg style="left:396px;top:476.61999999999995px" width="20.0" height="20.0" viewBox="0 0 20 20"><path d="M16.70 13.76 L17.62 13.71 L17.62 15.09 L16.70 15.04 L16.41 15.64 L17.02 16.33 L15.95 17.19 L15.41 16.45 L14.76 16.59 L14.60 17.50 L13.25 17.19 L13.51 16.31 L12.98 15.89 L12.18 16.33 L11.58 15.09 L12.43 14.73 L12.43 14.07 L11.58 13.71 L12.18 12.47 L12.98 12.91 L13.51 12.49 L13.25 11.61 L14.60 11.30 L14.76 12.21 L15.41 12.35 L15.95 11.61 L17.02 12.47 L16.41 13.16Z" fill="#8fafcd" stroke="#7696b8" stroke-width="0.5"/><circle cx="14.6" cy="14.4" r="0.9" fill="#ffffff"/><path d="M13.87 6.76 L15.61 6.80 L15.61 9.20 L13.87 9.24 L13.48 10.45 L14.86 11.50 L13.44 13.44 L12.02 12.45 L10.99 13.20 L11.50 14.86 L9.20 15.61 L8.64 13.97 L7.36 13.97 L6.80 15.61 L4.50 14.86 L5.01 13.20 L3.98 12.45 L2.56 13.44 L1.14 11.50 L2.52 10.45 L2.13 9.24 L0.39 9.20 L0.39 6.80 L2.13 6.76 L2.52 5.55 L1.14 4.50 L2.56 2.56 L3.98 3.55 L5.01 2.80 L4.50 1.14 L6.80 0.39 L7.36 2.03 L8.64 2.03 L9.20 0.39 L11.50 1.14 L10.99 2.80 L12.02 3.55 L13.44 2.56 L14.86 4.50 L13.48 5.55Z" fill="#bdd6ec" stroke="#8eaecb" stroke-width="0.8"/><circle cx="8" cy="8" r="3.3" fill="#ffffff" stroke="#6e91b5" stroke-width="1.5"/></svg>
<svg style="left:396px;top:503.17999999999995px" width="20.0" height="20.0" viewBox="0 0 20 20"><path d="M16.70 13.76 L17.62 13.71 L17.62 15.09 L16.70 15.04 L16.41 15.64 L17.02 16.33 L15.95 17.19 L15.41 16.45 L14.76 16.59 L14.60 17.50 L13.25 17.19 L13.51 16.31 L12.98 15.89 L12.18 16.33 L11.58 15.09 L12.43 14.73 L12.43 14.07 L11.58 13.71 L12.18 12.47 L12.98 12.91 L13.51 12.49 L13.25 11.61 L14.60 11.30 L14.76 12.21 L15.41 12.35 L15.95 11.61 L17.02 12.47 L16.41 13.16Z" fill="#8fafcd" stroke="#7696b8" stroke-width="0.5"/><circle cx="14.6" cy="14.4" r="0.9" fill="#ffffff"/><path d="M13.87 6.76 L15.61 6.80 L15.61 9.20 L13.87 9.24 L13.48 10.45 L14.86 11.50 L13.44 13.44 L12.02 12.45 L10.99 13.20 L11.50 14.86 L9.20 15.61 L8.64 13.97 L7.36 13.97 L6.80 15.61 L4.50 14.86 L5.01 13.20 L3.98 12.45 L2.56 13.44 L1.14 11.50 L2.52 10.45 L2.13 9.24 L0.39 9.20 L0.39 6.80 L2.13 6.76 L2.52 5.55 L1.14 4.50 L2.56 2.56 L3.98 3.55 L5.01 2.80 L4.50 1.14 L6.80 0.39 L7.36 2.03 L8.64 2.03 L9.20 0.39 L11.50 1.14 L10.99 2.80 L12.02 3.55 L13.44 2.56 L14.86 4.50 L13.48 5.55Z" fill="#bdd6ec" stroke="#8eaecb" stroke-width="0.8"/><circle cx="8" cy="8" r="3.3" fill="#ffffff" stroke="#6e91b5" stroke-width="1.5"/></svg>
<svg style="left:396px;top:529.7399999999999px" width="20.0" height="20.0" viewBox="0 0 20 20"><path d="M16.70 13.76 L17.62 13.71 L17.62 15.09 L16.70 15.04 L16.41 15.64 L17.02 16.33 L15.95 17.19 L15.41 16.45 L14.76 16.59 L14.60 17.50 L13.25 17.19 L13.51 16.31 L12.98 15.89 L12.18 16.33 L11.58 15.09 L12.43 14.73 L12.43 14.07 L11.58 13.71 L12.18 12.47 L12.98 12.91 L13.51 12.49 L13.25 11.61 L14.60 11.30 L14.76 12.21 L15.41 12.35 L15.95 11.61 L17.02 12.47 L16.41 13.16Z" fill="#8fafcd" stroke="#7696b8" stroke-width="0.5"/><circle cx="14.6" cy="14.4" r="0.9" fill="#ffffff"/><path d="M13.87 6.76 L15.61 6.80 L15.61 9.20 L13.87 9.24 L13.48 10.45 L14.86 11.50 L13.44 13.44 L12.02 12.45 L10.99 13.20 L11.50 14.86 L9.20 15.61 L8.64 13.97 L7.36 13.97 L6.80 15.61 L4.50 14.86 L5.01 13.20 L3.98 12.45 L2.56 13.44 L1.14 11.50 L2.52 10.45 L2.13 9.24 L0.39 9.20 L0.39 6.80 L2.13 6.76 L2.52 5.55 L1.14 4.50 L2.56 2.56 L3.98 3.55 L5.01 2.80 L4.50 1.14 L6.80 0.39 L7.36 2.03 L8.64 2.03 L9.20 0.39 L11.50 1.14 L10.99 2.80 L12.02 3.55 L13.44 2.56 L14.86 4.50 L13.48 5.55Z" fill="#bdd6ec" stroke="#8eaecb" stroke-width="0.8"/><circle cx="8" cy="8" r="3.3" fill="#ffffff" stroke="#6e91b5" stroke-width="1.5"/></svg>
<svg style="left:396px;top:556.3px" width="20.0" height="20.0" viewBox="0 0 20 20"><path d="M16.70 13.76 L17.62 13.71 L17.62 15.09 L16.70 15.04 L16.41 15.64 L17.02 16.33 L15.95 17.19 L15.41 16.45 L14.76 16.59 L14.60 17.50 L13.25 17.19 L13.51 16.31 L12.98 15.89 L12.18 16.33 L11.58 15.09 L12.43 14.73 L12.43 14.07 L11.58 13.71 L12.18 12.47 L12.98 12.91 L13.51 12.49 L13.25 11.61 L14.60 11.30 L14.76 12.21 L15.41 12.35 L15.95 11.61 L17.02 12.47 L16.41 13.16Z" fill="#8fafcd" stroke="#7696b8" stroke-width="0.5"/><circle cx="14.6" cy="14.4" r="0.9" fill="#ffffff"/><path d="M13.87 6.76 L15.61 6.80 L15.61 9.20 L13.87 9.24 L13.48 10.45 L14.86 11.50 L13.44 13.44 L12.02 12.45 L10.99 13.20 L11.50 14.86 L9.20 15.61 L8.64 13.97 L7.36 13.97 L6.80 15.61 L4.50 14.86 L5.01 13.20 L3.98 12.45 L2.56 13.44 L1.14 11.50 L2.52 10.45 L2.13 9.24 L0.39 9.20 L0.39 6.80 L2.13 6.76 L2.52 5.55 L1.14 4.50 L2.56 2.56 L3.98 3.55 L5.01 2.80 L4.50 1.14 L6.80 0.39 L7.36 2.03 L8.64 2.03 L9.20 0.39 L11.50 1.14 L10.99 2.80 L12.02 3.55 L13.44 2.56 L14.86 4.50 L13.48 5.55Z" fill="#bdd6ec" stroke="#8eaecb" stroke-width="0.8"/><circle cx="8" cy="8" r="3.3" fill="#ffffff" stroke="#6e91b5" stroke-width="1.5"/></svg>
<svg style="left:396px;top:582.86px" width="20.0" height="20.0" viewBox="0 0 20 20"><path d="M16.70 13.76 L17.62 13.71 L17.62 15.09 L16.70 15.04 L16.41 15.64 L17.02 16.33 L15.95 17.19 L15.41 16.45 L14.76 16.59 L14.60 17.50 L13.25 17.19 L13.51 16.31 L12.98 15.89 L12.18 16.33 L11.58 15.09 L12.43 14.73 L12.43 14.07 L11.58 13.71 L12.18 12.47 L12.98 12.91 L13.51 12.49 L13.25 11.61 L14.60 11.30 L14.76 12.21 L15.41 12.35 L15.95 11.61 L17.02 12.47 L16.41 13.16Z" fill="#8fafcd" stroke="#7696b8" stroke-width="0.5"/><circle cx="14.6" cy="14.4" r="0.9" fill="#ffffff"/><path d="M13.87 6.76 L15.61 6.80 L15.61 9.20 L13.87 9.24 L13.48 10.45 L14.86 11.50 L13.44 13.44 L12.02 12.45 L10.99 13.20 L11.50 14.86 L9.20 15.61 L8.64 13.97 L7.36 13.97 L6.80 15.61 L4.50 14.86 L5.01 13.20 L3.98 12.45 L2.56 13.44 L1.14 11.50 L2.52 10.45 L2.13 9.24 L0.39 9.20 L0.39 6.80 L2.13 6.76 L2.52 5.55 L1.14 4.50 L2.56 2.56 L3.98 3.55 L5.01 2.80 L4.50 1.14 L6.80 0.39 L7.36 2.03 L8.64 2.03 L9.20 0.39 L11.50 1.14 L10.99 2.80 L12.02 3.55 L13.44 2.56 L14.86 4.50 L13.48 5.55Z" fill="#bdd6ec" stroke="#8eaecb" stroke-width="0.8"/><circle cx="8" cy="8" r="3.3" fill="#ffffff" stroke="#6e91b5" stroke-width="1.5"/></svg>
<svg style="left:2px;top:3px" width="20" height="22" viewBox="0 0 20 22">
<circle cx="14" cy="15.3" r="2.3" fill="none" stroke="#8fd3e2" stroke-width="1.6"/>
<circle cx="7.7" cy="8.3" r="5.2" fill="none" stroke="#c9eef6" stroke-width="2.6"/>
</svg>
<svg style="left:5px;top:95px" width="20" height="22" viewBox="0 0 20 22">
<path d="M16.50 16.13 L17.42 16.09 L17.42 17.51 L16.50 17.47 L16.20 18.10 L16.80 18.80 L15.69 19.68 L15.15 18.94 L14.47 19.09 L14.30 20.00 L12.91 19.68 L13.16 18.80 L12.61 18.36 L11.80 18.80 L11.18 17.51 L12.03 17.15 L12.03 16.45 L11.18 16.09 L11.80 14.80 L12.61 15.24 L13.16 14.80 L12.91 13.92 L14.30 13.60 L14.47 14.51 L15.15 14.66 L15.69 13.92 L16.80 14.80 L16.20 15.50Z" fill="#a9c6e2" stroke="#9dbcdb" stroke-width="0.5"/>
<circle cx="14.3" cy="16.8" r="1" fill="#e4e4e4"/>
<path d="M14.18 7.41 L15.71 7.46 L15.71 9.74 L14.18 9.79 L13.79 10.97 L15.00 11.91 L13.66 13.76 L12.39 12.90 L11.39 13.63 L11.81 15.10 L9.64 15.81 L9.12 14.37 L7.88 14.37 L7.36 15.81 L5.19 15.10 L5.61 13.63 L4.61 12.90 L3.34 13.76 L2.00 11.91 L3.21 10.97 L2.82 9.79 L1.29 9.74 L1.29 7.46 L2.82 7.41 L3.21 6.23 L2.00 5.29 L3.34 3.44 L4.61 4.30 L5.61 3.57 L5.19 2.10 L7.36 1.39 L7.88 2.83 L9.12 2.83 L9.64 1.39 L11.81 2.10 L11.39 3.57 L12.39 4.30 L13.66 3.44 L15.00 5.29 L13.79 6.23Z" fill="#b4d0ea" stroke="#9fc0de" stroke-width="0.8"/>
<circle cx="8.5" cy="8.6" r="4.4" fill="#cfe0f0"/>
<circle cx="8.5" cy="8.6" r="2.6" fill="#e2e6ea" stroke="#8fb2d4" stroke-width="1.1"/>
</svg>
<svg style="left:157px;top:97px" width="22" height="22" viewBox="0 0 22 22">
<circle cx="15" cy="17" r="2.2" fill="none" stroke="#b4cbe0" stroke-width="1.4"/>
<circle cx="8.7" cy="9" r="4.8" fill="none" stroke="#d9ebf8" stroke-width="2.2"/>
</svg>

<div class="a" id="ctx" style="left:776px;top:183px;width:188.5px;height:286px;background:#f9f9f9;border-radius:8px;box-shadow:0 0 0 1px rgba(0,0,0,0.06),0 6px 14px rgba(0,0,0,0.16)"></div>
<div class="a" style="left:783px;top:187px;width:171.5px;height:25.5px;background:#f0f0f0;border-radius:4px"></div>

<div class="a" style="left:784px;top:322.5px;width:170px;height:1px;background:#e9e9e9"></div>
<div class="a" style="left:784px;top:359.0px;width:170px;height:1px;background:#e9e9e9"></div>
<div class="a" style="left:784px;top:396.0px;width:170px;height:1px;background:#e9e9e9"></div>
<div class="a" style="left:784px;top:433.0px;width:170px;height:1px;background:#e9e9e9"></div>
<svg style="left:938px;top:337px" width="8" height="10" viewBox="0 0 8 10"><path d="M3 2.6 L5.3 5 L3 7.4" fill="none" stroke="#666" stroke-width="1"/></svg>
<div class="t" style="left:820.0px;top:192.00px;font-size:16px;color:#1c1c1c"><span class="w" style="transform:scaleX(0.9409)">Start</span></div>
<div class="t" style="left:820.0px;top:218.00px;font-size:16px;color:#a9a9a9"><span class="w" style="transform:scaleX(0.9204)">Stop</span></div>
<div class="t" style="left:820.0px;top:245.00px;font-size:16px;color:#a9a9a9"><span class="w" style="transform:scaleX(0.9146)">Pause</span></div>
<div class="t" style="left:820.0px;top:271.00px;font-size:16px;color:#a9a9a9"><span class="w" style="transform:scaleX(0.9232)">Resume</span></div>
<div class="t" style="left:820.0px;top:298.00px;font-size:16px;color:#a9a9a9"><span class="w" style="transform:scaleX(0.9171)">Restart</span></div>
<div class="t" style="left:820.0px;top:335.00px;font-size:16px;color:#1c1c1c"><span class="w" style="transform:scaleX(0.9038)">All Tasks</span></div>
<div class="t" style="left:820.0px;top:372.00px;font-size:16px;color:#1c1c1c"><span class="w" style="transform:scaleX(0.9173)">Refresh</span></div>
<div class="t" style="left:820.0px;top:446.00px;font-size:16px;color:#1c1c1c"><span class="w" style="transform:scaleX(0.9694)">Help</span></div>
<div class="t" style="left:820.0px;top:409.00px;font-size:15.4px;color:#1c1c1c;font-weight:700"><span class="w" style="transform:scaleX(0.9561)">Properties</span></div>
</body></html>
